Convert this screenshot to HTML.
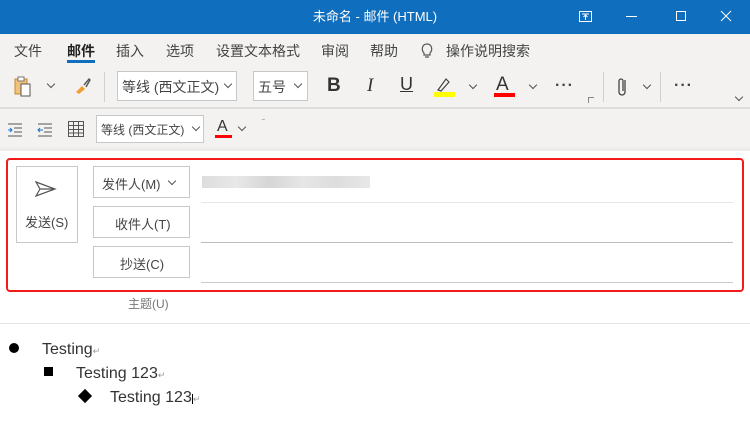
<!DOCTYPE html>
<html><head><meta charset="utf-8"><style>
*{margin:0;padding:0;box-sizing:border-box}
body{width:750px;height:436px;overflow:hidden;background:#fff;font-family:"Liberation Sans","Noto Sans CJK SC",sans-serif;position:relative;color:#333}
.a{position:absolute}
.t{font-size:14px;color:#444;white-space:nowrap}
.box{position:absolute;border:1px solid #c8c8c8;background:#fff}
.chev{position:absolute;width:6px;height:6px;border-right:1.3px solid #555;border-bottom:1.3px solid #555;transform:rotate(45deg)}
.sep{position:absolute;width:1px;background:#d0d0d0}
</style></head><body>
<div class="a" style="left:0;top:0;width:750px;height:34px;background:#106ebe"></div>
<div class="a" style="left:0;top:0;width:750px;height:34px;color:#fff;font-size:13px;text-align:center;line-height:33px">未命名 - 邮件 (HTML)</div>
<svg class="a" style="left:578px;top:9px" width="16" height="16"><rect x="1.5" y="2.5" width="12" height="10" fill="none" stroke="#fff"/><path d="M4 5h7M7.5 6v5M5.5 8l2-2 2 2" stroke="#fff" fill="none"/></svg>
<div class="a" style="left:626px;top:16px;width:11px;height:1px;background:#fff"></div>
<div class="a" style="left:676px;top:11px;width:10px;height:10px;border:1px solid #fff"></div>
<svg class="a" style="left:720px;top:10px" width="12" height="12"><path d="M1 1L11 11M11 1L1 11" stroke="#fff"/></svg>
<div class="a" style="left:0;top:34px;width:750px;height:114px;background:#f3f2f1"></div>
<div class="a t" style="left:14px;top:41px">文件</div>
<div class="a t" style="left:67px;top:41px;font-weight:bold;color:#222">邮件</div>
<div class="a" style="left:67px;top:60px;width:28px;height:3px;background:#106ebe"></div>
<div class="a t" style="left:116px;top:41px">插入</div>
<div class="a t" style="left:166px;top:41px">选项</div>
<div class="a t" style="left:216px;top:41px">设置文本格式</div>
<div class="a t" style="left:321px;top:41px">审阅</div>
<div class="a t" style="left:370px;top:41px">帮助</div>
<svg class="a" style="left:420px;top:42px" width="14" height="18"><path d="M4 11C1 8 2 2 7 2s6 6 3 9v2H4z M5 15h4" fill="none" stroke="#555" stroke-width="1.2"/></svg>
<div class="a t" style="left:446px;top:41px">操作说明搜索</div>
<svg class="a" style="left:13px;top:75px" width="22" height="24"><rect x="2" y="4" width="12" height="15" fill="#f0c27a" stroke="#c88a2a"/><rect x="8" y="9" width="9" height="12" fill="#fff" stroke="#555"/><rect x="5" y="2" width="6" height="4" fill="#fff" stroke="#777"/></svg>
<div class="chev" style="left:48px;top:81px"></div>
<svg class="a" style="left:73px;top:76px" width="20" height="20"><path d="M3 16l6-6 3 3-6 5z" fill="#f0a030"/><path d="M11 9l5-6 1 1-4 7" fill="none" stroke="#555" stroke-width="1.4"/></svg>
<div class="sep" style="left:104px;top:72px;height:30px"></div>
<div class="box" style="left:117px;top:71px;width:120px;height:30px"></div>
<div class="a t" style="left:122px;top:77px">等线 (西文正文)</div>
<div class="chev" style="left:225px;top:81px"></div>
<div class="box" style="left:253px;top:71px;width:55px;height:30px"></div>
<div class="a t" style="left:258px;top:77px">五号</div>
<div class="chev" style="left:295px;top:81px"></div>
<div class="a" style="left:327px;top:75px;font-size:19px;font-weight:bold;color:#333">B</div>
<div class="a" style="left:367px;top:75px;font-size:19px;font-style:italic;font-family:'Liberation Serif',serif;color:#333">I</div>
<div class="a" style="left:400px;top:74px;font-size:18px;color:#333;text-decoration:underline">U</div>
<svg class="a" style="left:434px;top:75px" width="22" height="22"><path d="M4 15l8-11 3 3-8 9z" fill="none" stroke="#444" stroke-width="1.2"/><rect x="0" y="17" width="21" height="5" fill="#ffff00"/></svg>
<div class="chev" style="left:470px;top:82px"></div>
<div class="a" style="left:496px;top:74px;font-size:19px;color:#333">A</div>
<div class="a" style="left:494px;top:93px;width:21px;height:4px;background:#f00"></div>
<div class="chev" style="left:530px;top:82px"></div>
<div class="a" style="left:555px;top:77px;font-size:16px;font-weight:bold;color:#444;letter-spacing:1px">···</div>
<div class="a" style="left:588px;top:97px;width:6px;height:6px;border-left:1px solid #888;border-top:1px solid #888"></div>
<div class="sep" style="left:603px;top:72px;height:30px"></div>
<svg class="a" style="left:616px;top:76px" width="14" height="22"><path d="M9 4v12a3 3 0 0 1-6 0V5a2 2 0 0 1 4 0v10" fill="none" stroke="#444" stroke-width="1.3"/></svg>
<div class="chev" style="left:644px;top:82px"></div>
<div class="sep" style="left:660px;top:72px;height:30px"></div>
<div class="a" style="left:674px;top:77px;font-size:16px;font-weight:bold;color:#444;letter-spacing:1px">···</div>
<div class="chev" style="left:736px;top:94px"></div>
<div class="a" style="left:0;top:107px;width:750px;height:2px;background:#dcdcdc"></div>
<svg class="a" style="left:7px;top:121px" width="18" height="16"><path d="M1 3h14M7 7h8M7 11h8M1 15h14" stroke="#555"/><path d="M1 9h4M3 7l2 2-2 2" stroke="#1a73c8" fill="none"/></svg>
<svg class="a" style="left:37px;top:121px" width="18" height="16"><path d="M1 3h14M7 7h8M7 11h8M1 15h14" stroke="#555"/><path d="M1 9h5M3 7l-2 2 2 2" stroke="#1a73c8" fill="none"/></svg>
<svg class="a" style="left:67px;top:120px" width="18" height="18"><rect x="1.5" y="1.5" width="15" height="15" fill="none" stroke="#555"/><path d="M1.5 5.5h15M1.5 9.5h15M1.5 13h15M6.5 1.5v15M11.5 1.5v15" stroke="#555"/></svg>
<div class="box" style="left:96px;top:115px;width:108px;height:28px"></div>
<div class="a" style="left:101px;top:121px;font-size:12px;color:#444">等线 (西文正文)</div>
<div class="chev" style="left:193px;top:124px"></div>
<div class="a" style="left:217px;top:118px;font-size:16px;color:#333">A</div>
<div class="a" style="left:215px;top:135px;width:17px;height:3px;background:#f00"></div>
<div class="chev" style="left:239px;top:124px"></div>
<div class="a" style="left:262px;top:119px;font-size:8px;color:#777">‾</div>
<div class="a" style="left:0;top:148px;width:750px;height:3px;background:#ececec"></div>
<div class="a" style="left:6px;top:158px;width:738px;height:134px;border:2.5px solid #f31a1a;border-radius:4px"></div>
<div class="box" style="left:16px;top:166px;width:62px;height:77px"></div>
<svg class="a" style="left:34px;top:180px" width="24" height="18"><path d="M2 2l19 7-19 7 4-7z M6 9h15" fill="none" stroke="#555" stroke-width="1.2"/></svg>
<div class="a" style="left:25px;top:212px;font-size:13px;color:#444">发送(S)</div>
<div class="box" style="left:93px;top:166px;width:97px;height:32px"></div>
<div class="a" style="left:102px;top:174px;font-size:13px;color:#444">发件人(M)</div>
<div class="chev" style="left:169px;top:178px"></div>
<div class="box" style="left:93px;top:206px;width:97px;height:32px"></div>
<div class="a" style="left:115px;top:214px;font-size:13px;color:#444">收件人(T)</div>
<div class="box" style="left:93px;top:246px;width:97px;height:32px"></div>
<div class="a" style="left:120px;top:254px;font-size:13px;color:#444">抄送(C)</div>
<div class="a" style="left:202px;top:176px;width:168px;height:12px;background:linear-gradient(90deg,#ddd,#e8e8e8,#d6d6d6,#e6e6e6,#ddd,#e8e8e8)"></div>
<div class="a" style="left:201px;top:202px;width:532px;height:1px;background:#e6e6e6"></div>
<div class="a" style="left:201px;top:242px;width:532px;height:1px;background:#bbb"></div>
<div class="a" style="left:201px;top:282px;width:532px;height:1px;background:#ccc"></div>
<div class="a" style="left:128px;top:295px;font-size:12px;color:#777">主题(U)</div>
<div class="a" style="left:0;top:323px;width:750px;height:1px;background:#e4e4e4"></div>
<div class="a" style="left:9px;top:343px;width:10px;height:10px;border-radius:50%;background:#000"></div>
<div class="a" style="left:42px;top:341px;font-size:16px;color:#333">Testing<span style="font-size:9px;color:#999">↵</span></div>
<div class="a" style="left:44px;top:367px;width:9px;height:9px;background:#000"></div>
<div class="a" style="left:76px;top:365px;font-size:16px;color:#333">Testing 123<span style="font-size:9px;color:#999">↵</span></div>
<div class="a" style="left:80px;top:391px;width:10px;height:10px;background:#000;transform:rotate(45deg)"></div>
<div class="a" style="left:110px;top:389px;font-size:16px;color:#333">Testing 123<span style="border-left:1px solid #000;font-size:9px;color:#999">↵</span></div>
</body></html>
